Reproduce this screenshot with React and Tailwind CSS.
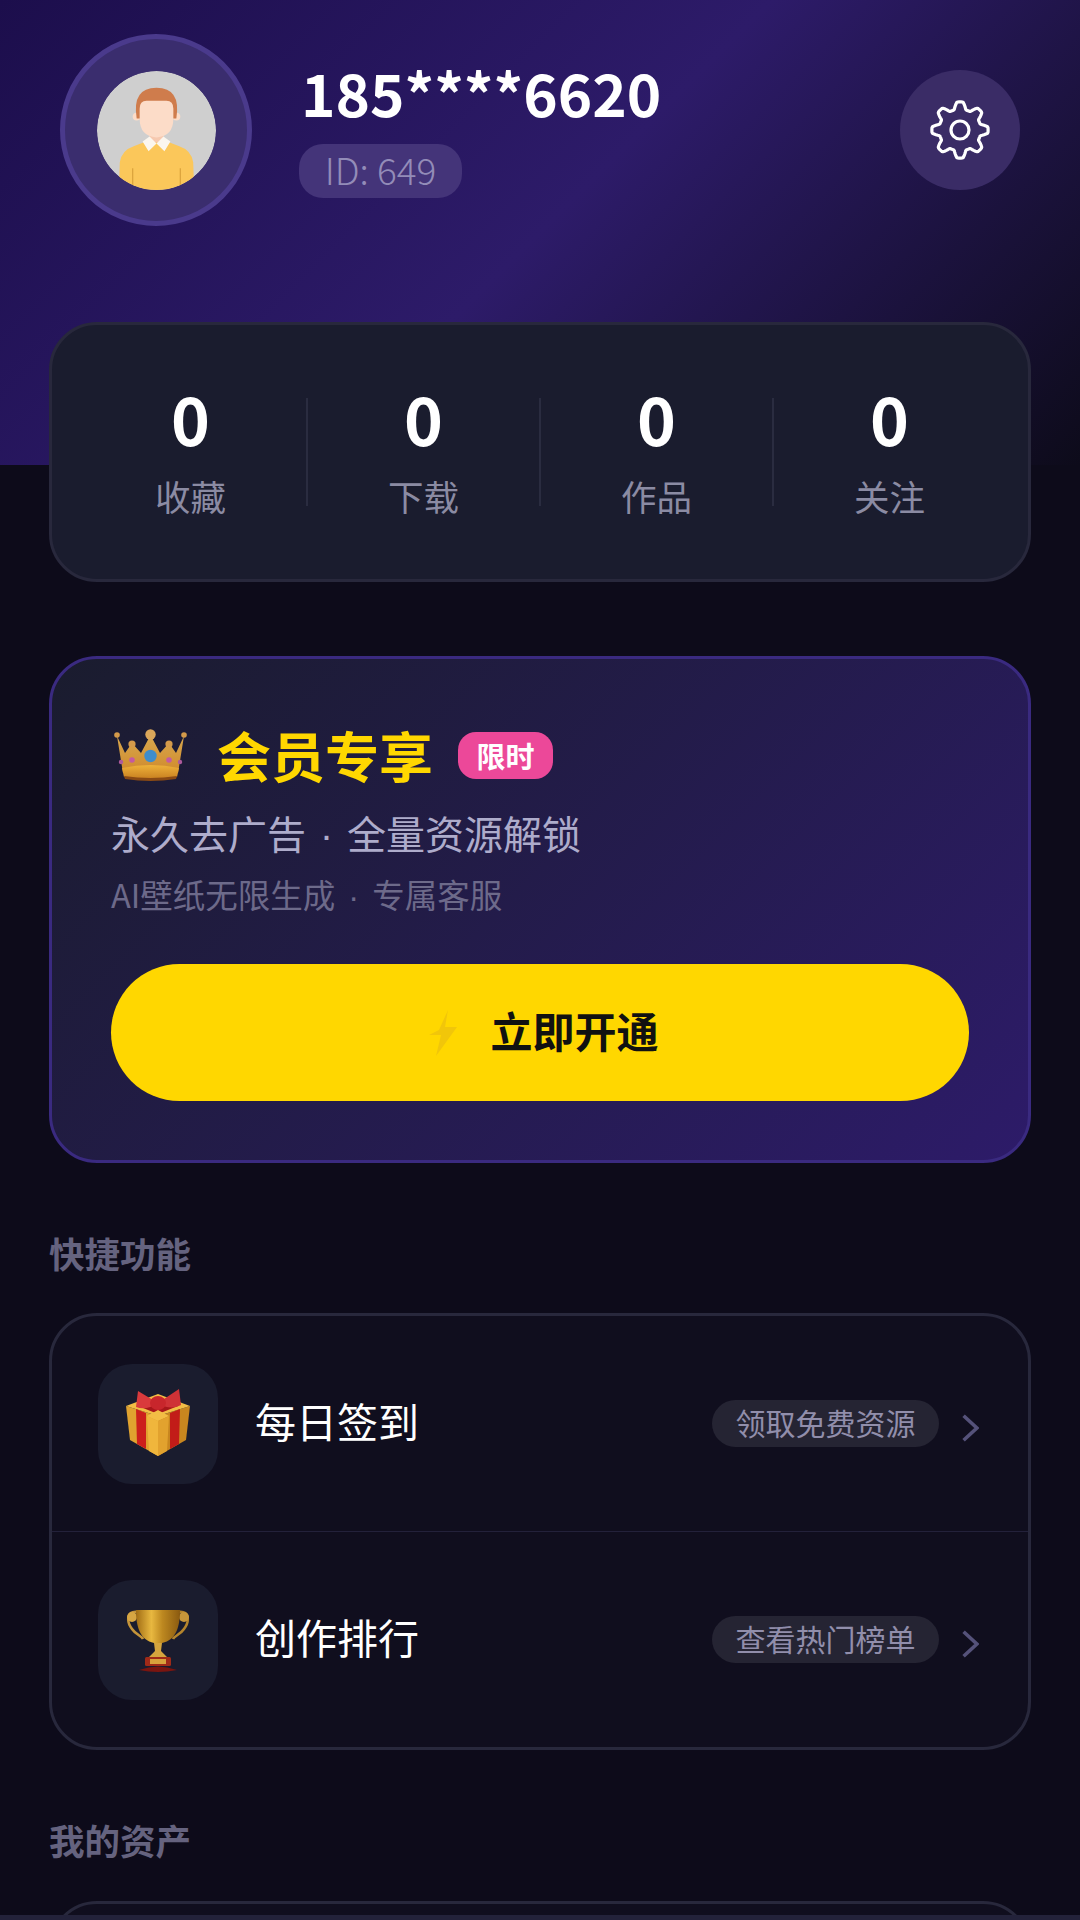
const FONT = "font-['Noto_Sans_CJK_SC','Noto_Sans',sans-serif]";

const stats = [
  { label: '收藏', value: 0 },
  { label: '下载', value: 0 },
  { label: '作品', value: 0 },
  { label: '关注', value: 0 },
];

// wavy gear outline, 8 rounded teeth
const gearPoints = Array.from({ length: 160 }, (_, i) => {
  const a = (i / 160) * Math.PI * 2;
  const wave = Math.max(-1, Math.min(1, 1.5 * Math.cos(8 * a)));
  const r = 24.5 + 3.6 * wave;
  return `${(30 + r * Math.sin(a)).toFixed(2)},${(30 - r * Math.cos(a)).toFixed(2)}`;
}).join(' ');

function GearIcon() {
  return (
    <svg viewBox="0 0 60 60" className="w-[60px] h-[60px]" fill="none" stroke="#ffffff" strokeWidth="3.2" strokeLinejoin="round">
      <polygon points={gearPoints} />
      <circle cx="30" cy="30" r="9" />
    </svg>
  );
}

function AvatarArt() {
  return (
    <svg viewBox="0 0 120 120" className="w-[119px] h-[119px] rounded-full">
      <circle cx="60" cy="60" r="60" fill="#cfcfcf" />
      <path d="M22 120 L23 92 Q25 80 37 76 L52 70 H68 L83 76 Q95 80 97 92 L98 120 Z" fill="#fbc75a" />
      <path d="M36 98 L36 116 M84 98 L84 116" stroke="#d9a23c" strokeWidth="1.2" />
      <circle cx="40" cy="46" r="4" fill="#fcdcc8" />
      <circle cx="80" cy="46" r="4" fill="#fcdcc8" />
      <path d="M40 48 Q35 17 60 17 Q85 17 80 48 Z" fill="#cf7c4c" />
      <rect x="53" y="58" width="14" height="14" rx="5" fill="#f6c9b0" />
      <path d="M43 38 Q43 30 50 30 H70 Q77 30 77 38 V48 Q77 66 60 67 Q43 66 43 48 Z" fill="#fcdcc8" />
      <path d="M46 71 L53 66 L60 73 L52 81 Z M74 71 L67 66 L60 73 L68 81 Z" fill="#fbf6ee" />
    </svg>
  );
}

function CrownArt() {
  return (
    <svg viewBox="0 0 73 53" className="w-[73px] h-[53px]">
      <defs>
        <linearGradient id="crownBody" x1="0" y1="0" x2="0" y2="1">
          <stop offset="0" stopColor="#d8a84e" />
          <stop offset="1" stopColor="#d08a2c" />
        </linearGradient>
        <linearGradient id="crownBand" x1="0" y1="0" x2="0" y2="1">
          <stop offset="0" stopColor="#eeb23a" />
          <stop offset="1" stopColor="#c87f20" />
        </linearGradient>
      </defs>
      <path d="M3 7 L11 24 L18 14 L27 24 L36.5 6 L46 24 L55 14 L62 24 L70 7 L64 44 H9 Z" fill="url(#crownBody)" />
      <circle cx="3" cy="6" r="2.8" fill="#d49a4a" />
      <circle cx="18" cy="15" r="3.6" fill="#d49a4a" />
      <circle cx="36.5" cy="5.5" r="5.2" fill="#dba75a" />
      <circle cx="55" cy="15" r="3.6" fill="#d49a4a" />
      <circle cx="70" cy="6" r="2.8" fill="#d49a4a" />
      <circle cx="36.5" cy="27" r="6.2" fill="#3f8dcc" />
      <circle cx="18" cy="31" r="2.8" fill="#c45aa0" />
      <circle cx="55" cy="31" r="2.8" fill="#c45aa0" />
      <circle cx="7" cy="33" r="2.2" fill="#ad5a9c" />
      <circle cx="66" cy="33" r="2.2" fill="#ad5a9c" />
      <path d="M8 39 Q36.5 33 65 39 L63 48 Q36.5 52 10 48 Z" fill="url(#crownBand)" />
      <path d="M10 47 Q36.5 51 63 47 L62 50 Q36.5 54 11 50 Z" fill="#8a4a14" />
    </svg>
  );
}

function GiftArt() {
  return (
    <svg viewBox="0 0 64 70" className="w-[64px] h-[70px]">
      <path d="M0 17 L32 27 V67 L4 51 Z" fill="#e0a22f" />
      <path d="M64 17 L32 27 V67 L60 51 Z" fill="#c8861f" />
      <path d="M0 17 L32 5 L64 17 L32 27 Z" fill="#f2bd45" />
      <path d="M10 20 L20 24 V60 L11 55 Z" fill="#cc1f1c" />
      <path d="M54 20 L44 24 V60 L53 55 Z" fill="#c21c18" />
      <path d="M12 17 L32 25 L52 17 L32 11 Z" fill="#a8161a" />
      <path d="M21 27 L32 21 L43 27 L32 32 Z" fill="#f2bd45" />
      <path d="M21 27 L32 32 V67 L23 62 Z" fill="#f0b63c" />
      <path d="M43 27 L32 32 V67 L41 62 Z" fill="#e2a22e" />
      <path d="M32 14 L12 2 L10 18 Q20 22 32 14 Z" fill="#d93a3c" />
      <path d="M32 14 L53 0 L55 16 Q44 22 32 14 Z" fill="#cf3236" />
      <ellipse cx="32" cy="14" rx="8" ry="7" fill="#c8262c" />
    </svg>
  );
}

function TrophyArt() {
  return (
    <svg viewBox="0 0 64 66" className="w-[64px] h-[66px]">
      <defs>
        <linearGradient id="cup" x1="0" y1="0" x2="1" y2="0">
          <stop offset="0" stopColor="#a06c14" />
          <stop offset="0.35" stopColor="#e8b840" />
          <stop offset="0.6" stopColor="#bd8820" />
          <stop offset="1" stopColor="#8a5a10" />
        </linearGradient>
      </defs>
      <path d="M11 5 C1 4 0 14 6 22 C10 28 16 29 17 32" fill="none" stroke="#c4943a" strokeWidth="2.6" />
      <path d="M53 5 C63 4 64 14 58 22 C54 28 48 29 47 32" fill="none" stroke="#b4842c" strokeWidth="2.6" />
      <circle cx="6" cy="10" r="5" fill="#d7a643" />
      <circle cx="58" cy="10" r="5" fill="#c7963a" />
      <path d="M10 3 H54 C54 20 50 33 36 36 H28 C14 33 10 20 10 3 Z" fill="url(#cup)" />
      <path d="M28 36 H36 L35 44 L41 50 H23 L29 44 Z" fill="#d5a53e" />
      <rect x="19" y="50" width="26" height="9" rx="1.5" fill="#a02a18" />
      <rect x="24" y="52" width="16" height="5" fill="#d9a13c" />
      <path d="M13 63 Q32 56 51 63 Q32 67 13 63 Z" fill="#7a1510" />
    </svg>
  );
}

function MenuRow({ icon, title, hint, last }) {
  return (
    <div className={`flex items-center pl-[46px] pr-[49px] ${last ? 'h-[215px]' : 'h-[216px] border-b border-[#23213a]'}`}>
      <div className="w-[120px] h-[120px] rounded-[34px] bg-[#1a1c2e] flex items-center justify-center">{icon}</div>
      <div className="ml-[37px] mb-[5px] text-[41px] text-white flex-1">{title}</div>
      <div className="h-[47px] w-[227px] pb-[2px] rounded-full bg-[#252433] text-[30px] text-[#918eab] flex items-center justify-center">{hint}</div>
      <svg viewBox="0 0 16 26" className="w-[17px] h-[28px] ml-[23px] mt-[8px]" fill="none" stroke="#55527a" strokeWidth="3.4">
        <path d="M1.5 1.5 L14 13 L1.5 24.5" />
      </svg>
    </div>
  );
}

export default function App() {
  return (
    <div className={`relative h-[1920px] overflow-hidden bg-[#0d0b1a] ${FONT}`}>
      {/* top banner */}
      <div className="h-[465px] bg-[linear-gradient(135deg,#1c0e4c_0%,#2d1b69_50%,#0d0b1a_100%)] pt-[34px] pl-[60px] pr-[60px]">
        <div className="flex items-start">
          <div className="w-[192px] h-[192px] rounded-full border-[5px] border-[#4a3a8c] bg-[#3a2d6e] flex items-center justify-center">
            <AvatarArt />
          </div>
          <div className="ml-[49px] flex-1">
            <div className="text-[58.5px] leading-[70px] font-bold text-white mt-[23px]">185****6620</div>
            <div className="mt-[17px] -ml-[2px] w-[163px] h-[54px] pb-[2px] rounded-[24px] bg-[#443479] text-[37px] font-light text-[#938cb8] flex items-center justify-center">
              ID: 649
            </div>
          </div>
          <div className="mt-[36px] w-[120px] h-[120px] rounded-full bg-[#3a2c66] flex items-center justify-center">
            <GearIcon />
          </div>
        </div>
      </div>

      <div className="px-[49px] -mt-[143px]">
        {/* stats */}
        <div className="h-[260px] rounded-[48px] border-[3px] border-[#28283c] bg-[#1a1c2e] flex items-center px-[23px]">
          {stats.map((s, i) => (
            <div key={s.label} className={`flex-1 h-[108px] flex flex-col items-center justify-center ${i < 3 ? 'border-r-2 border-[#2a2c40]' : ''}`}>
              <div className="text-[66px] leading-[64px] font-bold text-white -mt-[12px]">{s.value}</div>
              <div className="text-[35.5px] leading-[44px] text-[#8b8ba3] mt-[25px] -mb-[11px]">{s.label}</div>
            </div>
          ))}
        </div>

        {/* vip */}
        <div className="mt-[74px] h-[507px] rounded-[48px] border-[3px] border-[#3a2a80] bg-[linear-gradient(135deg,#1a1c2e_0%,#2d1b69_100%)] px-[59px] pt-[65px]">
          <div className="flex items-center h-[60px]">
            <div className="w-[78px] mt-[3px] flex justify-center"><CrownArt /></div>
            <div className="ml-[28px] text-[54px] font-bold text-[#ffd700] whitespace-nowrap">会员专享</div>
            <div className="ml-[25px] mt-[3px] w-[95px] h-[47px] rounded-[18px] bg-[#ec4899] text-white text-[29px] font-bold flex items-center justify-center">限时</div>
          </div>
          <div className="mt-[21px] text-[39px] leading-[54px] text-[#aeaccb]">
            永久去广告<span className="mx-[14px] font-['Liberation_Sans']">·</span>全量资源解锁
          </div>
          <div className="mt-[9px] text-[32.5px] leading-[44px] text-[#6d6a8a]">
            AI壁纸无限生成<span className="mx-[13px] font-['Liberation_Sans']">·</span>专属客服
          </div>
          <div className="mt-[45px] h-[137px] pl-[6px] pb-[6px] rounded-full bg-[#ffd700] flex items-center justify-center">
            <svg viewBox="0 0 32 50" className="w-[32px] h-[50px] mr-[31px] mt-[6px]" fill="#f1c60a">
              <path d="M21 2 L12 22 L2 27 H14 L9 48 L30 19 H18 Z" />
            </svg>
            <span className="text-[42px] font-bold text-[#111111]">立即开通</span>
          </div>
        </div>

        {/* quick */}
        <div className="mt-[68px] text-[35.5px] leading-[44px] font-bold text-[#65637f]">快捷功能</div>
        <div className="mt-[38px] rounded-[48px] border-[3px] border-[#28283c] bg-[#100e1e]">
          <MenuRow icon={<GiftArt />} title="每日签到" hint="领取免费资源" />
          <MenuRow icon={<TrophyArt />} title="创作排行" hint="查看热门榜单" last />
        </div>

        {/* assets */}
        <div className="mt-[68px] text-[35.5px] leading-[44px] font-bold text-[#65637f]">我的资产</div>
        <div className="mt-[39px] h-[100px] rounded-[48px] border-[3px] border-[#28283c] bg-[#100e1e]" />
      </div>

      {/* bottom nav edge */}
      <div className="absolute left-0 right-0 bottom-0 h-[5px] bg-[#23223a]" />
    </div>
  );
}
